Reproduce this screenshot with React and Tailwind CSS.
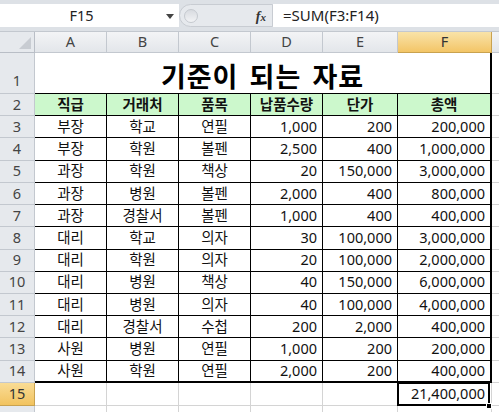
import React from "react";

const rows = [
  ["부장", "학교", "연필", "1,000", "200", "200,000"],
  ["부장", "학원", "볼펜", "2,500", "400", "1,000,000"],
  ["과장", "학원", "책상", "20", "150,000", "3,000,000"],
  ["과장", "병원", "볼펜", "2,000", "400", "800,000"],
  ["과장", "경찰서", "볼펜", "1,000", "400", "400,000"],
  ["대리", "학교", "의자", "30", "100,000", "3,000,000"],
  ["대리", "학원", "의자", "20", "100,000", "2,000,000"],
  ["대리", "병원", "책상", "40", "150,000", "6,000,000"],
  ["대리", "병원", "의자", "40", "100,000", "4,000,000"],
  ["대리", "경찰서", "수첩", "200", "2,000", "400,000"],
  ["사원", "병원", "연필", "1,000", "200", "200,000"],
  ["사원", "학원", "연필", "2,000", "200", "400,000"],
];

const headers = ["직급", "거래처", "품목", "납품수량", "단가", "총액"];
const cols = ["A", "B", "C", "D", "E", "F"];

function RowHead({ n, h, active, bottom }) {
  return (
    <div
      className={
        "flex justify-center border-r border-b text-[14.5px] " +
        (bottom ? "items-end pb-[1px] " : "items-center ") +
        (active
          ? "bg-gradient-to-b from-[#f9dc95] to-[#f2c35e] border-[#c9a24f] text-[#333]"
          : "bg-[#e6e9ed] border-[#c3c8cf] text-[#444]")
      }
      style={{ height: h }}
    >
      {n}
    </div>
  );
}

export default function App() {
  const rowH = 22.23;
  return (
    <div
      className="w-[499px] h-[412px] overflow-hidden bg-white"
      style={{ fontFamily: '"Noto Sans", "Noto Sans CJK KR", sans-serif' }}
    >
      {/* formula bar */}
      <div className="bg-[#dde1e6] pt-[4px] pb-[4px] border-b border-[#c3c8cf]">
        <div className="flex h-[23px]">
          <div className="w-[179px] bg-white flex items-center">
            <div className="w-[163px] text-center text-[14.5px] text-[#222]">F15</div>
            <svg width="8" height="5" viewBox="0 0 8 5" className="ml-[3px] mt-[1px]">
              <path d="M0 0 L8 0 L4 5 Z" fill="#444" />
            </svg>
          </div>
          <div className="w-[94px] bg-[#e6e9ed] rounded-l-full border border-[#c8ccd2] flex items-center relative">
            <div className="ml-[4px] w-[14px] h-[14px] rounded-full bg-gradient-to-b from-[#d8dbe0] to-[#f2f3f5] border border-[#c5c9cf]" />
            <span
              className="absolute right-[6px] top-[1px] text-[14px] italic font-bold text-[#333]"
              style={{ fontFamily: '"Liberation Serif", serif' }}
            >
              f<span className="text-[11px]">x</span>
            </span>
          </div>
          <div className="flex-1 bg-white flex items-center pl-[10px] text-[15px] text-[#222]">
            =SUM(F3:F14)
          </div>
        </div>
      </div>

      {/* sheet */}
      <div className="grid grid-cols-[35px_72px_72px_72px_72px_75px_94px_1fr]">
        {/* column header row */}
        <div className="h-[21px] bg-[#e6e9ed] border-r border-b border-[#b9bec6] relative">
          <svg width="12" height="12" viewBox="0 0 12 12" className="absolute right-[3px] bottom-[3px]">
            <path d="M12 0 L12 12 L0 12 Z" fill="#c8ccd2" />
          </svg>
        </div>
        {cols.map((c) => (
          <div
            key={c}
            className={
              "h-[21px] flex items-center justify-center border-r border-b text-[14.5px] " +
              (c === "F"
                ? "bg-gradient-to-b from-[#f9e3a8] to-[#f3c566] border-[#c9a24f] text-[#333]"
                : "bg-gradient-to-b from-[#f3f4f6] to-[#e3e6ea] border-[#c3c8cf] text-[#444]")
            }
          >
            {c}
          </div>
        ))}
        <div className="h-[21px] bg-gradient-to-b from-[#f3f4f6] to-[#e3e6ea] border-b border-[#c3c8cf]" />

        {/* row 1 */}
        <RowHead n={1} h={41} bottom />
        <div className="col-span-6 h-[41px] border-b border-r-2 border-black flex items-end justify-center pb-[4px]">
          <span
            className="text-[27px] font-bold leading-none text-black tracking-[1px]"
            style={{ fontFamily: '"Noto Sans CJK KR", sans-serif', wordSpacing: "4px" }}
          >
            기준이 되는 자료
          </span>
        </div>
        <div className="h-[41px] border-b border-[#d4d4d4]" />

        {/* row 2 header */}
        <RowHead n={2} h={rowH} />
        {headers.map((t, i) => (
          <div
            key={t}
            className={
              "bg-[#ccf8cc] border-b border-black flex items-center justify-center text-[14.5px] font-semibold text-[#111] " +
              (i === 5 ? "border-r-2" : "border-r")
            }
            style={{ height: rowH }}
          >
            {t}
          </div>
        ))}
        <div className="border-b border-[#d4d4d4]" style={{ height: rowH }} />

        {/* data rows */}
        {rows.map((r, ri) => {
          const last = ri === rows.length - 1;
          return (
            <React.Fragment key={ri}>
              <RowHead n={ri + 3} h={rowH} />
              {r.map((v, ci) => (
                <div
                  key={ci}
                  className={
                    "border-black flex items-center text-[14.5px] text-[#111] " +
                    (ci < 3 ? "justify-center " : "justify-end pr-[5px] ") +
                    (ci === 5 ? "border-r-2 " : "border-r ") +
                    (last ? "border-b-2" : "border-b")
                  }
                  style={{ height: rowH }}
                >
                  {v}
                </div>
              ))}
              <div className="border-b border-[#d4d4d4]" style={{ height: rowH }} />
            </React.Fragment>
          );
        })}

        {/* row 15 */}
        <RowHead n={15} h={23} active />
        {[0, 1, 2, 3, 4].map((i) => (
          <div key={i} className="h-[23px] border-r border-b border-[#d4d4d4]" />
        ))}
        <div className="h-[23px] relative border-r border-b border-[#d4d4d4] flex items-center justify-end pr-[6px] text-[14.5px] text-[#111]">
          <div className="absolute -left-[1px] -top-[1px] right-[1px] -bottom-[1px] border-2 border-black" />
          21,400,000
          <div className="absolute -right-[1px] -bottom-[4px] w-[6px] h-[6px] bg-black border border-white" />
        </div>
        <div className="h-[23px] border-b border-[#d4d4d4]" />

        {/* row 16 (only its top edge is in view) */}
        <RowHead n="" h={22} />
        {[0, 1, 2, 3, 4, 5].map((i) => (
          <div key={i} className="h-[22px] border-r border-b border-[#d4d4d4]" />
        ))}
        <div className="h-[22px] border-b border-[#d4d4d4]" />
      </div>
    </div>
  );
}
